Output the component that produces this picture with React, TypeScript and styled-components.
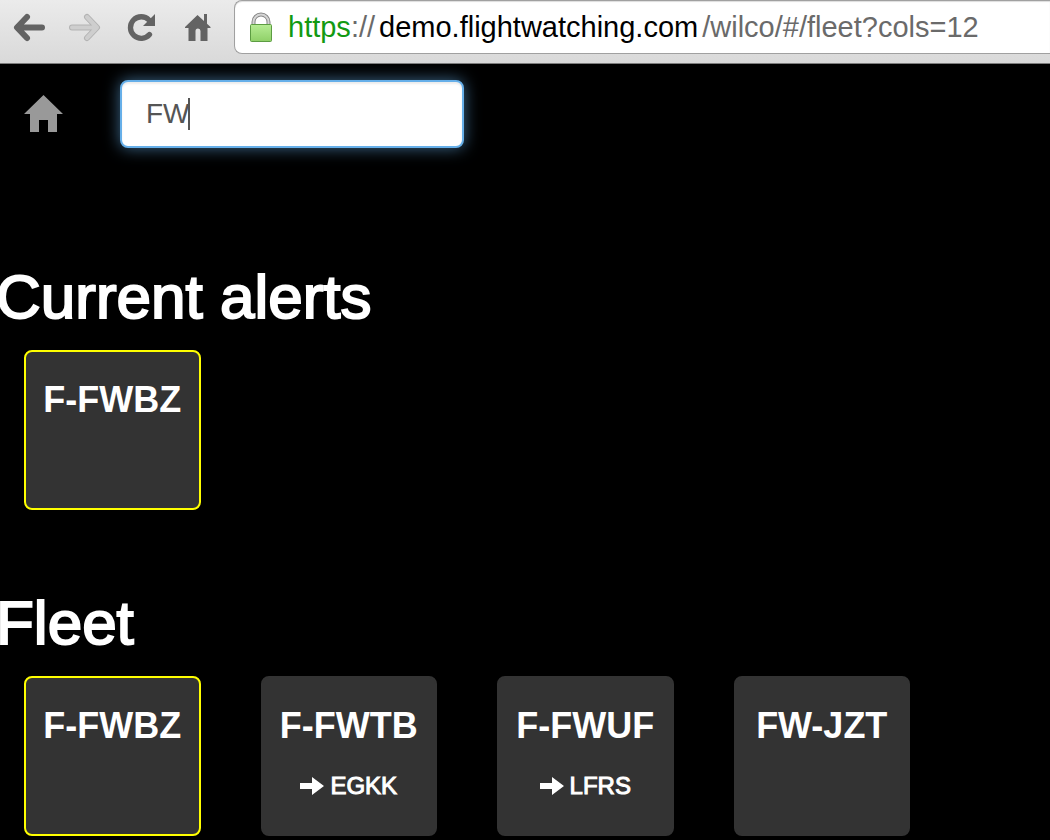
import React, { useState } from "react";
import styled, { createGlobalStyle } from "styled-components";

const GlobalStyle = createGlobalStyle`
  *, *::before, *::after { box-sizing: border-box; }
  body {
    margin: 0;
    background: #000;
    color: #fff;
    font-family: "Liberation Sans", Arial, Helvetica, sans-serif;
    overflow-x: hidden;
  }
`;

const Toolbar = styled.header`
  display: flex;
  align-items: flex-start;
  height: 64px;
  padding-left: 12px;
  background: linear-gradient(#ebebeb, #d9d9d9);
  border-bottom: 1px solid #7d7d7d;
`;

const ToolbarButtons = styled.nav`
  display: flex;
  flex: none;
  gap: 20px;
  padding: 10px 18px 0 0;
`;

const IconButton = styled.button`
  display: flex;
  flex: none;
  width: 36px;
  height: 36px;
  padding: 0;
  border: 0;
  background: none;
  cursor: pointer;
`;

const AddressBar = styled.div`
  display: flex;
  flex: 1;
  align-items: center;
  gap: 15px;
  min-width: 0;
  height: 54px;
  padding-left: 14px;
  background: #fff;
  border: 1px solid #a0a0a0;
  border-right: 0;
  border-radius: 8px 0 0 8px;
  box-shadow: inset 0 1px 1px #ddd;
`;

const Url = styled.div`
  flex: 1;
  min-width: 0;
  overflow: hidden;
  white-space: nowrap;
  font-size: 29px;
  line-height: 38px;
  color: #6a6a6a;
  outline: none;
`;

const Scheme = styled.span`
  color: #129a12;
`;

const Domain = styled.span`
  margin: 0 4px;
  color: #000;
`;

const SearchRow = styled.div`
  display: flex;
  align-items: center;
  gap: 56px;
  padding: 16px 24px 0;
`;

const HomeLink = styled.a`
  display: flex;
  width: 40px;
  height: 40px;
`;

const SearchField = styled.label`
  position: relative;
  flex: 0 1 344px;
`;

const SearchInput = styled.input`
  display: block;
  width: 100%;
  height: 68px;
  padding: 0 24px;
  border: 2px solid #66afe9;
  border-radius: 8px;
  background: #fff;
  color: #555;
  caret-color: transparent;
  font: 28px/40px "Liberation Sans", Arial, Helvetica, sans-serif;
  outline: none;
  box-shadow: inset 0 2px 2px rgba(0, 0, 0, 0.075), 0 0 16px rgba(102, 175, 233, 0.6);
`;

const Caret = styled.span`
  position: absolute;
  top: 18px;
  left: 68px;
  width: 2px;
  height: 32px;
  background: #555;
`;

const Main = styled.main`
  display: flex;
  flex-direction: column;
  gap: 48px;
  padding-top: 84px;
`;

const Heading = styled.h1`
  margin: 0 0 0 -4px;
  padding: 32px 0 20px;
  font-size: 62px;
  font-weight: 400;
  line-height: 66px;
  -webkit-text-stroke: 2px #fff;
`;

const TileGrid = styled.div`
  display: grid;
  grid-template-columns: repeat(4, minmax(0, 1fr));
  gap: 60px;
  padding: 0 140px 0 24px;
`;

const Tile = styled.a<{ $alert?: boolean }>`
  display: flex;
  flex-direction: column;
  align-items: center;
  gap: 24px;
  height: 160px;
  padding-top: 26px;
  border: 2px solid ${(p) => (p.$alert ? "#ff0" : "#333")};
  border-radius: 8px;
  background: #333;
  color: #fff;
  text-decoration: none;
`;

const Registration = styled.span`
  font-size: 36px;
  font-weight: 700;
  line-height: 44px;
  white-space: nowrap;
`;

const Destination = styled.span`
  display: flex;
  align-items: center;
  gap: 6px;
  font-size: 24px;
  line-height: 28px;
  -webkit-text-stroke: 1px #fff;
`;

const BackIcon = () => (
  <svg width="36" height="36" viewBox="0 0 36 36" fill="none" stroke="#636363" strokeWidth="6" strokeLinecap="round" strokeLinejoin="round">
    <path d="M15 7 5 17.500 15 28M6 17.500h24" />
  </svg>
);

const ForwardIcon = () => (
  <svg width="36" height="36" viewBox="0 0 36 36" fill="none" strokeLinecap="round" strokeLinejoin="round">
    <path d="M19 7l10 10.500L19 28M28 17.500H4" stroke="#b3b3b3" strokeWidth="6" />
    <path d="M19 7l10 10.500L19 28M28 17.500H4" stroke="#cecece" strokeWidth="4" />
  </svg>
);

const ReloadIcon = () => (
  <svg width="36" height="36" viewBox="0 0 36 36">
    <path d="M25.500 24.500A10.800 10.800 0 1 1 25 10" fill="none" stroke="#636363" strokeWidth="5.300" strokeLinecap="round" />
    <path d="M31 4v12H19z" fill="#636363" />
  </svg>
);

const BrowserHomeIcon = () => (
  <svg width="36" height="36" viewBox="0 0 36 36">
    <path d="M17.500 5 24 11V4h3v9.700l3.500 3.300v1h-3v13H20.500V21a2.500 2.500 0 0 0-5 0v10H8.500V18H5v-1z" fill="#636363" />
  </svg>
);

const LockIcon = () => (
  <svg width="24" height="32" viewBox="0 0 24 32">
    <defs>
      <linearGradient id="lock-body" x1="0" y1="0" x2="0" y2="1">
        <stop offset="0" stopColor="#b6ec94" />
        <stop offset="1" stopColor="#8fd068" />
      </linearGradient>
    </defs>
    <path d="M4.500 14V11a7.500 7.500 0 0 1 15 0v3" fill="none" stroke="#858585" strokeWidth="4" />
    <path d="M4.500 14V11a7.500 7.500 0 0 1 15 0v3" fill="none" stroke="#d5d5d5" strokeWidth="2" />
    <rect x="1.500" y="13.500" width="21" height="17" rx="1" fill="url(#lock-body)" stroke="#5c9c42" />
  </svg>
);

const HomeIcon = () => (
  <svg width="40" height="40" viewBox="0 0 40 40">
    <path d="M19.500 1 39 20h-6v18h-9V26h-9v12H6V20H0z" fill="#999" />
  </svg>
);

const ArrowIcon = () => (
  <svg width="24" height="18" viewBox="0 0 24 18">
    <path d="M0 6h12V0l12 9-12 9v-6H0z" fill="#fff" />
  </svg>
);

type Aircraft = { name: string; alert?: boolean; to?: string };

const fleet: Aircraft[] = [
  { name: "F-FWBZ", alert: true },
  { name: "F-FWTB", to: "EGKK" },
  { name: "F-FWUF", to: "LFRS" },
  { name: "FW-JZT" },
];

const AircraftTiles = ({ items }: { items: Aircraft[] }) => (
  <TileGrid>
    {items.map((a) => (
      <Tile key={a.name} href={`#/aircraft/${a.name}`} $alert={a.alert}>
        <Registration>{a.name}</Registration>
        {a.to && (
          <Destination>
            <ArrowIcon />
            {a.to}
          </Destination>
        )}
      </Tile>
    ))}
  </TileGrid>
);

export default function App() {
  const [query, setQuery] = useState("FW");
  const shown = fleet.filter((a) => a.name.includes(query.toUpperCase()));

  return (
    <>
      <GlobalStyle />
      <Toolbar>
        <ToolbarButtons aria-label="Browser">
          <IconButton aria-label="Back"><BackIcon /></IconButton>
          <IconButton aria-label="Forward" disabled><ForwardIcon /></IconButton>
          <IconButton aria-label="Reload"><ReloadIcon /></IconButton>
          <IconButton aria-label="Home page"><BrowserHomeIcon /></IconButton>
        </ToolbarButtons>
        <AddressBar>
          <LockIcon />
          <Url role="textbox" aria-label="Address" contentEditable suppressContentEditableWarning spellCheck={false}>
            <Scheme>https</Scheme>://
            <Domain>demo.flightwatching.com</Domain>
            /wilco/#/fleet?cols=12
          </Url>
        </AddressBar>
      </Toolbar>
      <SearchRow>
        <HomeLink href="#/" aria-label="Home"><HomeIcon /></HomeLink>
        <SearchField>
          <SearchInput aria-label="Search aircraft" value={query} onChange={(e) => setQuery(e.target.value)} />
          {query === "FW" && <Caret />}
        </SearchField>
      </SearchRow>
      <Main>
        <section>
          <Heading>Current alerts</Heading>
          <AircraftTiles items={shown.filter((a) => a.alert)} />
        </section>
        <section>
          <Heading>Fleet</Heading>
          <AircraftTiles items={shown} />
        </section>
      </Main>
    </>
  );
}
